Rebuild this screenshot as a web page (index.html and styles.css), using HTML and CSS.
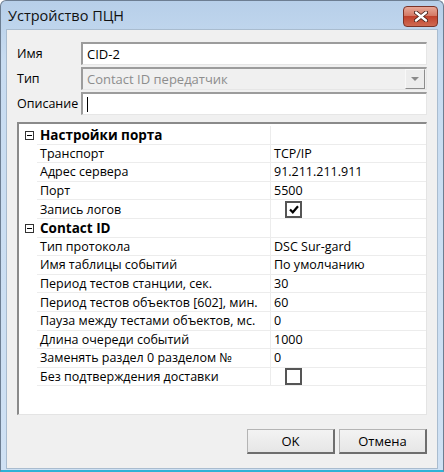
FILE: index.html
```html
<!DOCTYPE html>
<html lang="ru">
<head>
  <meta charset="UTF-8">
  <title>Устройство ПЦН</title>
  <link rel="stylesheet" href="styles.css">
</head>
<body>
  <div class="window">
    <div class="titlebar">
      <span class="title">Устройство ПЦН</span>
      <span class="close">
        <svg width="14" height="11" viewBox="0 0 14 11">
          <path d="M2 1.5 L12 9.5 M12 1.5 L2 9.5" stroke="#3d1a14" stroke-width="4" stroke-linecap="round"/>
          <path d="M2 1.5 L12 9.5 M12 1.5 L2 9.5" stroke="#ffffff" stroke-width="2.4" stroke-linecap="round"/>
        </svg>
      </span>
    </div>

    <div class="client">
      <div class="fields">
        <label class="field-label">Имя</label>
        <div class="textbox">CID-2</div>
        <label class="field-label">Тип</label>
        <div class="combo">
          <span>Contact ID передатчик</span>
          <span class="combo-btn"><span class="arrow"></span></span>
        </div>
        <label class="field-label">Описание</label>
        <div class="textbox"><span class="caret"></span></div>
      </div>

      <div class="grid">
        <div class="row category">
          <div class="margin"><span class="toggle"></span></div>
          <div class="name">Настройки порта</div>
          <div class="value"></div>
        </div>
        <div class="row">
          <div class="margin"></div>
          <div class="name">Транспорт</div>
          <div class="value">TCP/IP</div>
        </div>
        <div class="row">
          <div class="margin"></div>
          <div class="name">Адрес сервера</div>
          <div class="value">91.211.211.911</div>
        </div>
        <div class="row">
          <div class="margin"></div>
          <div class="name">Порт</div>
          <div class="value">5500</div>
        </div>
        <div class="row">
          <div class="margin"></div>
          <div class="name">Запись логов</div>
          <div class="value">
            <span class="check">
              <svg width="10" height="9" viewBox="0 0 10 9">
                <path d="M1 4.5 L3.8 7.3 L9 1.2" fill="none" stroke="#000" stroke-width="2.2"/>
              </svg>
            </span>
          </div>
        </div>
        <div class="row category">
          <div class="margin"><span class="toggle"></span></div>
          <div class="name">Contact ID</div>
          <div class="value"></div>
        </div>
        <div class="row">
          <div class="margin"></div>
          <div class="name">Тип протокола</div>
          <div class="value">DSC Sur-gard</div>
        </div>
        <div class="row">
          <div class="margin"></div>
          <div class="name">Имя таблицы событий</div>
          <div class="value">По умолчанию</div>
        </div>
        <div class="row">
          <div class="margin"></div>
          <div class="name">Период тестов станции, сек.</div>
          <div class="value">30</div>
        </div>
        <div class="row">
          <div class="margin"></div>
          <div class="name">Период тестов объектов [602], мин.</div>
          <div class="value">60</div>
        </div>
        <div class="row">
          <div class="margin"></div>
          <div class="name">Пауза между тестами объектов, мс.</div>
          <div class="value">0</div>
        </div>
        <div class="row">
          <div class="margin"></div>
          <div class="name">Длина очереди событий</div>
          <div class="value">1000</div>
        </div>
        <div class="row">
          <div class="margin"></div>
          <div class="name">Заменять раздел 0 разделом №</div>
          <div class="value">0</div>
        </div>
        <div class="row">
          <div class="margin"></div>
          <div class="name">Без подтверждения доставки</div>
          <div class="value"><span class="check"></span></div>
        </div>
      </div>

      <div class="buttons">
        <button class="btn">OK</button>
        <button class="btn">Отмена</button>
      </div>
    </div>
  </div>
</body>
</html>
```

FILE: styles.css
```css
body {
  margin: 0;
  font-family: "Open Sans", "Noto Sans", sans-serif;
  font-size: 12.5px;
  color: #000;
  background: #fff;
}

.window {
  width: 444px;
  height: 472px;
  box-sizing: border-box;
  display: flex;
  flex-direction: column;
  padding: 0 5px 1px 5px;
  background: linear-gradient(#b7cfe9, #c8dcf1 60px, #cfe1f4);
  border: 1px solid #6d7e92;
  border-bottom: 2px solid #2fb2d6;
  border-radius: 6px 6px 0 0;
}

.titlebar {
  height: 28px;
  display: flex;
  justify-content: space-between;
  align-items: flex-start;
  flex-shrink: 0;
}

.title {
  font-size: 14.5px;
  margin: 5px 0 0 2px;
  color: #111;
}

.close {
  width: 33px;
  height: 19px;
  margin-top: 5px;
  display: flex;
  align-items: center;
  justify-content: center;
  border: 1px solid #7a3328;
  border-radius: 4px;
  background: linear-gradient(#e8a898, #d47a66 45%, #c0412c 50%, #cf6a52);
}

.client {
  flex: 1;
  display: flex;
  flex-direction: column;
  background: #f0f0f0;
  border: 1px solid #a9bccf;
  padding: 12px 10px 0 10px;
}

.fields {
  display: grid;
  grid-template-columns: 64px 1fr;
  grid-auto-rows: 23px;
  row-gap: 2px;
  align-items: center;
}

.field-label {
  font-size: 12.5px;
}

.textbox,
.combo {
  height: 23px;
  box-sizing: border-box;
  display: flex;
  align-items: center;
  padding-left: 4px;
  font-size: 13px;
  background: #fff;
  border: 1px solid;
  border-width: 2px 1px 1px 2px;
  border-color: #9c9c9c #e6e6e6 #e6e6e6 #9c9c9c;
}

.combo {
  background: #f0f0f0;
  color: #8d8d8d;
  justify-content: space-between;
  padding-right: 1px;
}

.combo-btn {
  width: 18px;
  height: 18px;
  display: flex;
  align-items: center;
  justify-content: center;
  border: 1px solid;
  border-color: #f8f8f8 #8c8c8c #8c8c8c #f8f8f8;
  background: #ececec;
}

.arrow {
  width: 0;
  height: 0;
  border-left: 4px solid transparent;
  border-right: 4px solid transparent;
  border-top: 4px solid #8a8a8a;
}

.caret {
  width: 1px;
  height: 15px;
  background: #000;
}

.grid {
  margin-top: 7px;
  height: 293px;
  box-sizing: border-box;
  background: #fff;
  border: 1px solid;
  border-width: 2px 1px 1px 2px;
  border-color: #8a8a8a #e4e4e4 #e4e4e4 #8a8a8a;
  padding-top: 2px;
}

.row {
  height: 18.6px;
  display: grid;
  grid-template-columns: 18px 234px 1fr;
}

.row .name,
.row .value {
  display: flex;
  align-items: center;
  border-bottom: 1px solid #ececec;
  white-space: nowrap;
  overflow: hidden;
}

.row .name {
  padding-left: 3px;
  border-right: 1px solid #ececec;
}

.row .value {
  padding-left: 3px;
}

.category .name {
  font-weight: bold;
  font-size: 13.5px;
}

.margin {
  display: flex;
  align-items: center;
  justify-content: center;
}

.toggle {
  width: 9px;
  height: 9px;
  box-sizing: border-box;
  border: 1px solid #333;
  position: relative;
  margin-left: 3px;
}

.toggle::after {
  content: "";
  position: absolute;
  left: 1px;
  right: 1px;
  top: 3px;
  height: 1px;
  background: #000;
}

.check {
  width: 17px;
  height: 17px;
  box-sizing: border-box;
  margin-left: 11px;
  border: 2px solid #555;
  background: #fff;
  display: flex;
  align-items: center;
  justify-content: center;
}

.buttons {
  display: flex;
  justify-content: flex-end;
  gap: 4px;
  margin-top: 14px;
}

.btn {
  width: 88px;
  height: 25px;
  font-family: inherit;
  font-size: 13px;
  background: linear-gradient(#f3f3f3, #e6e6e6);
  border: 1px solid;
  border-width: 1px 2px 2px 1px;
  border-color: #b4b4b4 #6e6e6e #6e6e6e #b4b4b4;
  padding: 0;
}
```
